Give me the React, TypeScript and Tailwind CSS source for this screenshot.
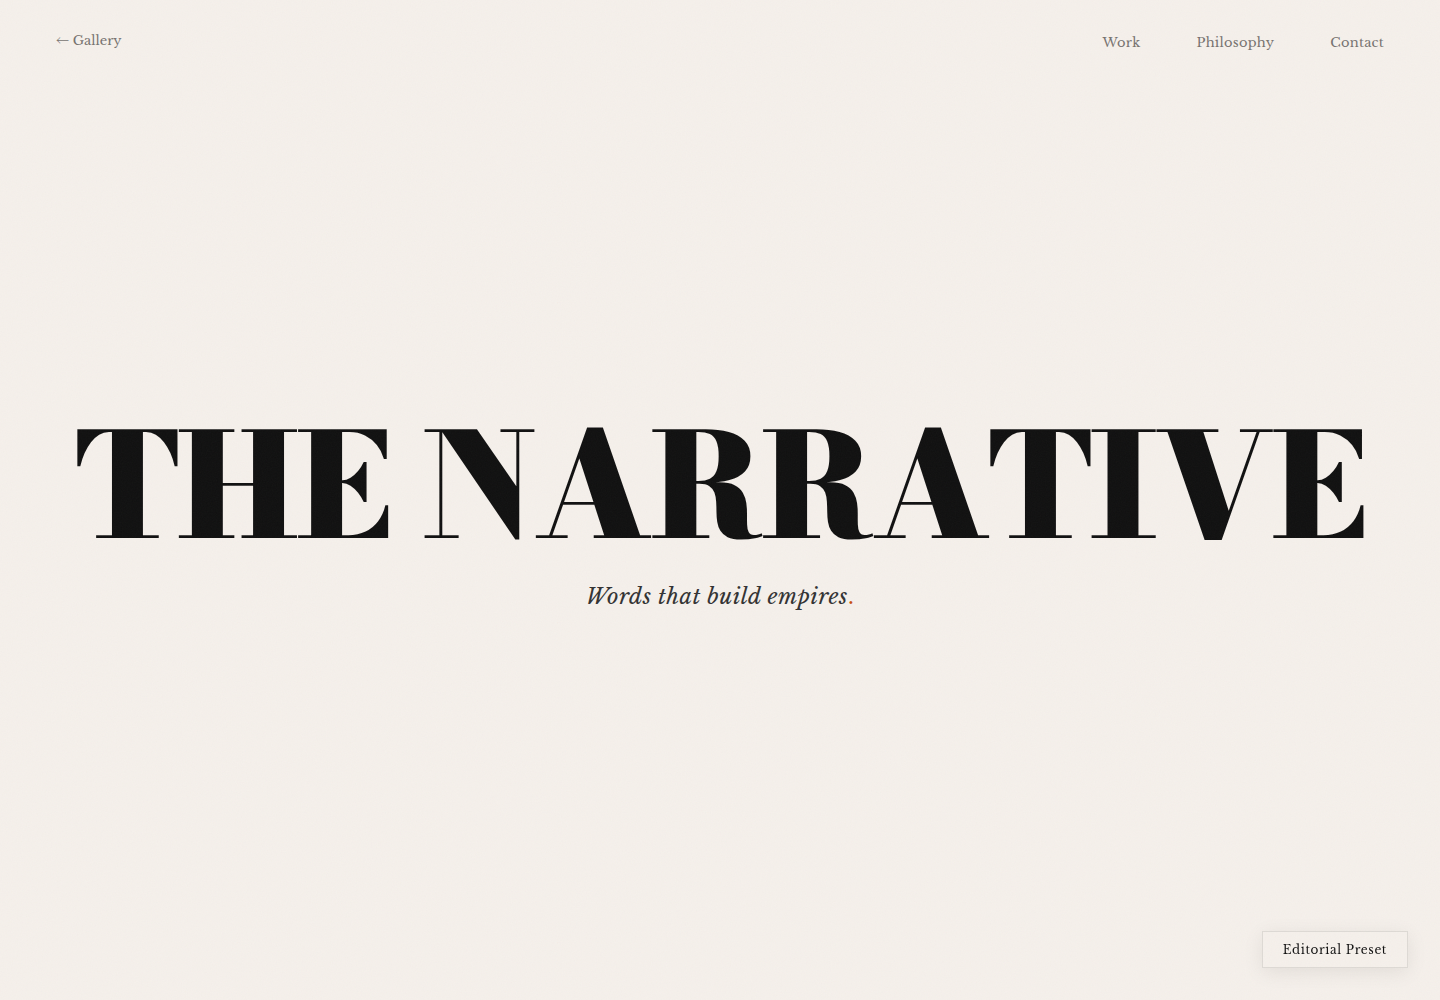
const navLinks = [
  { label: 'Work', href: '#work' },
  { label: 'Philosophy', href: '#philosophy' },
  { label: 'Contact', href: '#contact' },
];

function Grain() {
  return (
    <svg className="pointer-events-none fixed inset-0 z-50 h-full w-full opacity-[0.03]" aria-hidden="true">
      <filter id="grain">
        <feTurbulence type="fractalNoise" baseFrequency="0.8" numOctaves="4" stitchTiles="stitch" />
      </filter>
      <rect width="100%" height="100%" filter="url(#grain)" />
    </svg>
  );
}

export default function App() {
  return (
    <div className="flex min-h-screen flex-col bg-[#f5f0eb] font-['Libre_Baskerville','Liberation_Serif',serif] text-[#111111]">
      <Grain />

      <header className="flex items-start justify-between px-14 py-7 text-[13px] leading-[30px] text-[#777370]">
        <a href="#gallery" className="leading-[26px]">
          <span className="font-['Noto_Sans_CJK_JP',sans-serif] leading-none font-light">←</span> Gallery
        </a>
        <nav className="flex gap-14 tracking-[0.02em]">
          {navLinks.map((link) => (
            <a key={link.label} href={link.href}>
              {link.label}
            </a>
          ))}
        </nav>
      </header>

      <main className="flex flex-1 flex-col items-center justify-center pb-15 text-center">
        <h1 className="font-['Bodoni_Moda','Liberation_Serif',serif] text-[clamp(48px,10vw,144px)] leading-none font-black tracking-[-0.02em] whitespace-nowrap [font-kerning:none]">
          THE NARRATIVE
        </h1>
        <p className="mt-[23px] text-[22px] leading-8 tracking-[0.02em] text-[#333333] italic">
          Words that build empires<span className="text-[#c8500f] not-italic">.</span>
        </p>
      </main>

      <button
        type="button"
        className="fixed right-8 bottom-8 border border-[#dedad5] bg-[#f5f0eb] px-5 py-2 text-xs leading-[19px] tracking-wider shadow-[0_4px_20px_rgba(0,0,0,0.08)]"
      >
        Editorial Preset
      </button>
    </div>
  );
}
